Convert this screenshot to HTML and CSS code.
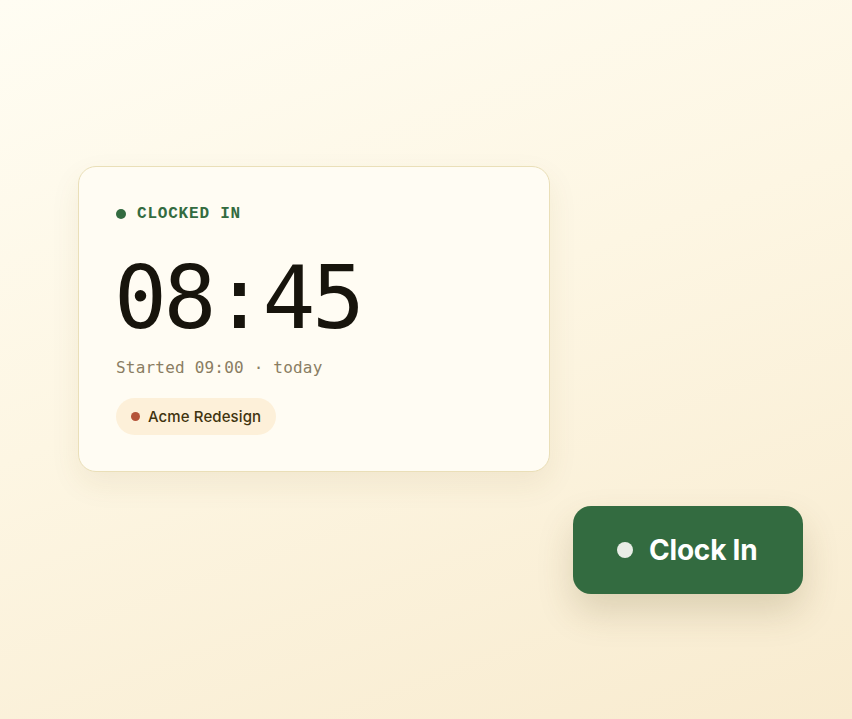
FILE: index.html
```html
<!DOCTYPE html>
<html lang="en">
<head>
    <meta charset="UTF-8">
    <meta name="viewport" content="width=device-width, initial-scale=1.0">
    <title>Time Clock</title>
<link rel="stylesheet" href="styles.css">
</head>
<body>
    <div class="stage">
        <div class="card">
            <div class="status"><span class="status-dot"></span>CLOCKED IN</div>
            <div class="elapsed">08:45</div>
            <div class="started">Started 09:00 · today</div>
            <div class="project"><span class="project-dot"></span>Acme Redesign</div>
        </div>
        <button class="clock-btn"><span class="btn-dot"></span>Clock In</button>
    </div>
</body>
</html>
```

FILE: styles.css
```css
html, body {
    height: 100%;
}
body {
    margin: 0;
    font-family: 'Inter', 'Noto Sans', sans-serif;
    background: linear-gradient(160deg, #fffdf3 0%, #fdf6e3 45%, #f8ebcf 100%);
    overflow: hidden;
}
.stage {
    display: flex;
    flex-direction: column;
    align-items: flex-start;
    padding: 166px 0 0 78px;
}
.card {
    box-sizing: border-box;
    width: 472px;
    height: 306px;
    padding: 38px 38px 0 37px;
    background-color: #fffcf3;
    border: 1px solid #eadfb8;
    border-radius: 18px;
    box-shadow: 0 12px 30px rgba(120, 90, 30, 0.08);
}
.status {
    display: flex;
    align-items: center;
    font-family: 'Liberation Mono', monospace;
    font-weight: 700;
    font-size: 16px;
    letter-spacing: 0.8px;
    color: #336b40;
    height: 18px;
}
.status-dot {
    width: 10px;
    height: 10px;
    border-radius: 50%;
    background-color: #336b40;
    margin-right: 11px;
}
.elapsed {
    font-family: 'DejaVu Sans Mono', monospace;
    font-size: 88px;
    line-height: 1;
    color: #17140c;
    margin-top: 31px;
    letter-spacing: -3.5px;
    margin-left: -2px;
}
.started {
    font-family: 'DejaVu Sans Mono', monospace;
    font-size: 16px;
    color: #8a7d62;
    margin-top: 16px;
    letter-spacing: 0.2px;
}
.project {
    display: inline-flex;
    align-items: center;
    height: 37px;
    padding: 0 15px;
    margin-top: 21px;
    border-radius: 19px;
    background-color: #fdf0d9;
    font-size: 15px;
    font-weight: 500;
    letter-spacing: 0.1px;
    color: #3f3410;
}
.project-dot {
    width: 9px;
    height: 9px;
    border-radius: 50%;
    background-color: #b4543a;
    margin-right: 8px;
}
.clock-btn {
    display: flex;
    align-items: center;
    box-sizing: border-box;
    width: 230px;
    height: 88px;
    margin: 34px 0 0 495px;
    padding: 0 0 0 44px;
    border: none;
    border-radius: 18px;
    background-color: #336b40;
    color: #ffffff;
    font-family: 'Inter', sans-serif;
    font-size: 28px;
    font-weight: 700;
    letter-spacing: -0.2px;
    box-shadow: 0 18px 36px rgba(90, 70, 20, 0.18);
    cursor: pointer;
}
.btn-dot {
    width: 16px;
    height: 16px;
    border-radius: 50%;
    background-color: #e9ede6;
    margin-right: 16px;
}
```
